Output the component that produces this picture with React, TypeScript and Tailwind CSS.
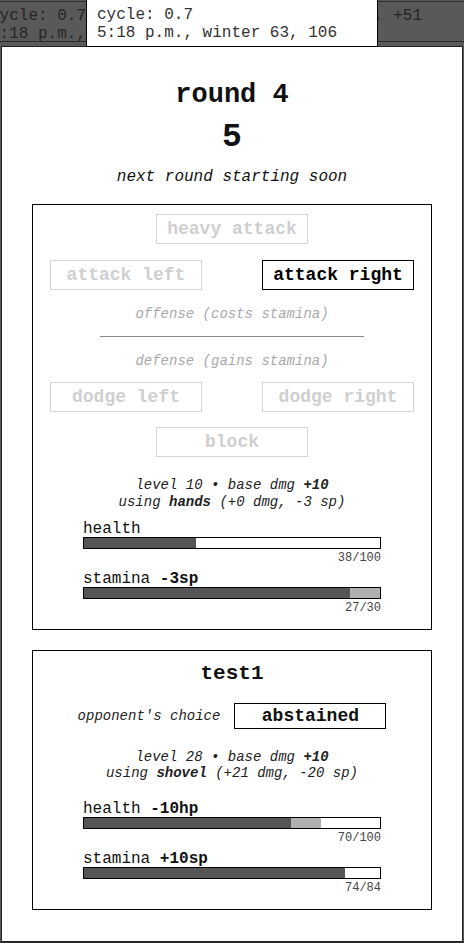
import * as React from "react";

const mono = "font-['Liberation_Mono','Courier_New',monospace]";

function ActionButton({ label, active }: { label: string; active?: boolean }) {
  return (
    <div
      className={
        "w-[152px] h-[30px] flex items-center justify-center border text-[18px] font-bold leading-none " +
        (active ? "border-black text-black" : "border-[#d6d6d6] text-[#cfcfcf]")
      }
    >
      {label}
    </div>
  );
}

function StatBar({
  label,
  delta,
  value,
  max,
  preview,
}: {
  label: string;
  delta?: string;
  value: number;
  max: number;
  preview?: number;
}) {
  const pct = (value / max) * 100;
  const prevPct = preview !== undefined ? (preview / max) * 100 : pct;
  const lo = Math.min(pct, prevPct);
  const hi = Math.max(pct, prevPct);
  return (
    <div className="w-[298px] mx-auto">
      <div className="text-[16px] leading-[18px] text-[#111]">
        {label}
        {delta && <span className="font-bold"> {delta}</span>}
      </div>
      <div className="mt-[-1px] h-[12px] border border-black bg-white flex">
        <div className="h-full bg-[#555555]" style={{ width: `${lo}%` }} />
        <div className="h-full bg-[#b0b0b0]" style={{ width: `${hi - lo}%` }} />
      </div>
      <div className="mt-[2px] text-right text-[12px] leading-[14px] text-[#444]">
        {value}/{max}
      </div>
    </div>
  );
}

export default function App() {
  return (
    <div className={`${mono} relative w-[464px] h-[943px] overflow-hidden bg-[#595959]`}>
      {/* background header */}
      <div className="mt-[1px] h-[41px] border-t border-b border-[#2e2e2e] flex justify-between text-[16px] leading-[18px] text-[#262626]">
        <div className="ml-[-10px] pt-[5px] whitespace-nowrap">
          <div>cycle: 0.7</div>
          <div>5:18 p.m., winter 63, 106</div>
        </div>
        <div className="mr-[42px] pt-[5px] whitespace-nowrap">
          <div>gold 320, +51</div>
        </div>
      </div>

      {/* modal panel */}
      <div className="mt-[4px] ml-[1px] w-[462px] h-[896px] bg-white border border-[#222] pt-[33px] text-[#111]">
        <div className="text-center text-[27px] font-bold leading-[30px]">round 4</div>
        <div className="mt-[10px] text-center text-[33px] font-bold leading-[36px]">5</div>
        <div className="mt-[11px] text-center text-[16px] italic leading-[20px]">
          next round starting soon
        </div>

        {/* player box */}
        <div className="mt-[17px] ml-[30px] w-[400px] border border-black pt-[9px] pb-[14px]">
          <div className="flex justify-center">
            <ActionButton label="heavy attack" />
          </div>
          <div className="mt-[16px] px-[17px] flex justify-between">
            <ActionButton label="attack left" />
            <ActionButton label="attack right" active />
          </div>
          <div className="mt-[16px] text-center text-[14px] italic leading-[17px] text-[#a8a8a8]">
            offense (costs stamina)
          </div>
          <div className="mt-[13px] mx-auto w-[264px] h-px bg-[#8a8a8a]" />
          <div className="mt-[16px] text-center text-[14px] italic leading-[17px] text-[#a8a8a8]">
            defense (gains stamina)
          </div>
          <div className="mt-[12px] px-[17px] flex justify-between">
            <ActionButton label="dodge left" />
            <ActionButton label="dodge right" />
          </div>
          <div className="mt-[15px] flex justify-center">
            <ActionButton label="block" />
          </div>
          <div className="mt-[20px] text-center text-[14px] italic leading-[17px] text-[#222]">
            <div>
              level 10 • base dmg <span className="font-bold">+10</span>
            </div>
            <div>
              using <span className="font-bold">hands</span> (+0 dmg, -3 sp)
            </div>
          </div>
          <div className="mt-[9px]">
            <StatBar label="health" value={38} max={100} />
          </div>
          <div className="mt-[5px]">
            <StatBar label="stamina" delta="-3sp" value={27} max={30} preview={30} />
          </div>
        </div>

        {/* opponent box */}
        <div className="mt-[20px] ml-[30px] w-[400px] border border-black pt-[11px] pb-[14px]">
          <div className="text-center text-[21px] font-bold leading-[24px]">test1</div>
          <div className="mt-[17px] flex items-center justify-center gap-[14px]">
            <span className="text-[14px] italic leading-[17px] text-[#222]">opponent's choice</span>
            <div className="w-[152px] h-[26px] border border-black flex items-center justify-center text-[18px] font-bold leading-none">
              abstained
            </div>
          </div>
          <div className="mt-[20px] text-center text-[14px] italic leading-[16px] text-[#222]">
            <div>
              level 28 • base dmg <span className="font-bold">+10</span>
            </div>
            <div>
              using <span className="font-bold">shovel</span> (+21 dmg, -20 sp)
            </div>
          </div>
          <div className="mt-[19px]">
            <StatBar label="health" delta="-10hp" value={70} max={100} preview={80} />
          </div>
          <div className="mt-[5px]">
            <StatBar label="stamina" delta="+10sp" value={74} max={84} />
          </div>
        </div>
      </div>

      {/* background bottom bar */}
      <div className="flex h-[6px] border-t border-[#2e2e2e]">
        <div className="w-[96px] border-r-2 border-[#2e2e2e]" />
        <div className="w-[268px] border-r-2 border-[#2e2e2e]" />
        <div className="flex-1" />
      </div>

      {/* tooltip overlay */}
      <div className="absolute left-[86px] top-[-1px] w-[292px] h-[48px] bg-white border border-black pl-[10px] pt-[6px] text-[16px] leading-[18px] text-[#333]">
        <div>cycle: 0.7</div>
        <div>5:18 p.m., winter 63, 106</div>
      </div>
    </div>
  );
}
